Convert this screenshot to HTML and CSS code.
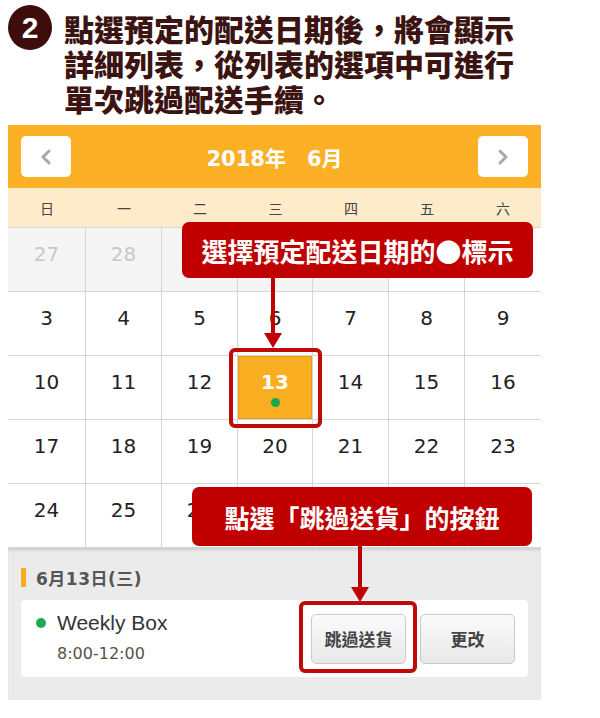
FILE: index.html
```html
<!DOCTYPE html>
<html lang="zh-Hant">
<head>
<meta charset="utf-8">
<title>單次跳過配送</title>
<link rel="stylesheet" href="styles.css">
</head>
<body>
<div class="page">
  <header class="step">
    <div class="num">2</div>
    <h1>點選預定的配送日期後，將會顯示<br>詳細列表，從列表的選項中可進行<br>單次跳過配送手續。</h1>
  </header>

  <div class="cal">
    <div class="cal-head">
      <div class="nav"><svg width="14" height="16" viewBox="0 0 14 16"><path d="M10 2 L4 8 L10 14" stroke="#a8a8a8" stroke-width="3" fill="none" stroke-linecap="round" stroke-linejoin="round"/></svg></div>
      <div class="month">2018年　6月</div>
      <div class="nav"><svg width="14" height="16" viewBox="0 0 14 16"><path d="M4 2 L10 8 L4 14" stroke="#a8a8a8" stroke-width="3" fill="none" stroke-linecap="round" stroke-linejoin="round"/></svg></div>
    </div>
    <div class="weekdays">
      <span>日</span><span>一</span><span>二</span><span>三</span><span>四</span><span>五</span><span>六</span>
    </div>
    <div class="grid">
      <div class="cell off">27</div><div class="cell off">28</div><div class="cell off">29</div><div class="cell off">30</div><div class="cell off">31</div><div class="cell">1</div><div class="cell">2</div>
      <div class="cell">3</div><div class="cell">4</div><div class="cell">5</div><div class="cell">6</div><div class="cell">7</div><div class="cell">8</div><div class="cell">9</div>
      <div class="cell">10</div><div class="cell">11</div><div class="cell">12</div><div class="cell sel">13<span class="dot"></span></div><div class="cell">14</div><div class="cell">15</div><div class="cell">16</div>
      <div class="cell">17</div><div class="cell">18</div><div class="cell">19</div><div class="cell">20</div><div class="cell">21</div><div class="cell">22</div><div class="cell">23</div>
      <div class="cell">24</div><div class="cell">25</div><div class="cell">26</div><div class="cell">27</div><div class="cell">28</div><div class="cell">29</div><div class="cell">30</div>
    </div>
    <div class="detail">
      <div class="detail-title">6月13日(三)</div>
      <div class="card">
        <div class="info">
          <div class="name"><span class="gdot"></span>Weekly Box</div>
          <div class="time">8:00-12:00</div>
        </div>
        <div class="btns">
          <button class="btn">跳過送貨</button>
          <button class="btn">更改</button>
        </div>
      </div>
    </div>

    <div class="callout c1">選擇預定配送日期的●標示</div>
    <div class="arrow a1"><div class="shaft"></div><div class="head"></div></div>
    <div class="frame f1"></div>

    <div class="callout c2">點選「跳過送貨」的按鈕</div>
    <div class="arrow a2"><div class="shaft"></div><div class="head"></div></div>
    <div class="frame f2"></div>
  </div>
</div>
</body>
</html>
```

FILE: styles.css
```css
* { box-sizing: border-box; }
body {
  margin: 0;
  background: #fff;
  font-family: "Noto Sans CJK TC", "Noto Sans", sans-serif;
}
.page { width: 600px; }

.step {
  display: flex;
  align-items: flex-start;
  gap: 12px;
  padding: 5px 0 0 8px;
  height: 125px;
}
.num {
  flex: none;
  width: 44px;
  height: 45px;
  border-radius: 50%;
  background: #3d0d0c;
  color: #fff;
  font: bold 30px/45px "Liberation Sans", sans-serif;
  text-align: center;
}
.step h1 {
  margin: 6px 0 0;
  font-size: 30px;
  line-height: 35px;
  font-weight: 900;
  color: #3b1412;
}

.cal {
  position: relative;
  width: 533px;
  margin-left: 8px;
}
.cal-head {
  height: 63px;
  background: #fcb026;
  display: flex;
  align-items: center;
  justify-content: space-between;
  padding: 0 13px;
}
.nav {
  width: 50px;
  height: 41px;
  background: #fff;
  border-radius: 5px;
  display: flex;
  align-items: center;
  justify-content: center;
}
.month {
  color: #fff;
  font: bold 21px "DejaVu Sans", "Noto Sans CJK TC", sans-serif;
}
.weekdays {
  display: grid;
  grid-template-columns: 78px 76px 76px 75px 76px 76px 76px;
  height: 40px;
  align-items: center;
  text-align: center;
  background: #fdebc9;
  border-bottom: 1px solid #d6d6d6;
  font-size: 14px;
  color: #444;
}
.grid {
  display: grid;
  grid-template-columns: 78px 76px 76px 75px 76px 76px 76px;
}
.cell {
  height: 64px;
  border-right: 1px solid #d6d6d6;
  border-bottom: 1px solid #d6d6d6;
  text-align: center;
  padding-top: 14px;
  font: 20px/24px "DejaVu Sans", sans-serif;
  color: #222;
}
.cell:nth-child(7n) { border-right: none; }
.cell.off { background: #f5f5f5; color: #c8c8c8; }
.cell.sel {
  background: #f9ae22;
  color: #fff;
  font-weight: bold;
  box-shadow: inset 0 0 0 1px #e49c16;
}
.dot {
  display: block;
  width: 9px;
  height: 9px;
  margin: 4px auto 0;
  border-radius: 50%;
  background: #1ba851;
}

.detail {
  height: 152px;
  background: #ebebeb;
  padding: 20px 13px 0;
  box-shadow: inset 0 3px 3px -1px rgba(0,0,0,.13);
}
.detail-title {
  display: flex;
  align-items: center;
  height: 19px;
  border-left: 5px solid #f9ab1c;
  padding-left: 10px;
  font: bold 17px "DejaVu Sans", "Noto Sans CJK TC", sans-serif;
  letter-spacing: 0.5px;
  color: #555;
}
.card {
  margin-top: 13px;
  height: 77px;
  background: #fff;
  border-radius: 4px;
  display: flex;
  align-items: center;
  justify-content: space-between;
  padding: 0 13px 0 15px;
}
.info { margin-top: -2px; }
.name {
  display: flex;
  align-items: center;
  gap: 11px;
  font: 21px/24px "Liberation Sans", sans-serif;
  color: #333;
}
.gdot {
  width: 10px;
  height: 10px;
  border-radius: 50%;
  background: #1ea957;
}
.time {
  margin: 9px 0 0 21px;
  font: 16px/20px "DejaVu Sans", sans-serif;
  color: #5a5048;
}
.btns { display: flex; gap: 14px; }
.btn {
  width: 95px;
  height: 50px;
  border: 1px solid #c9c9c9;
  border-radius: 5px;
  background: linear-gradient(#fbfbfb, #e8e8e8);
  font: bold 17px "Noto Sans CJK TC", sans-serif;
  color: #444;
  padding: 0;
}

.callout {
  position: absolute;
  background: #c00000;
  color: #fff;
  border-radius: 7px;
  font-weight: bold;
  display: flex;
  align-items: center;
  justify-content: center;
}
.c1 { left: 174px; top: 97px; width: 351px; height: 56px; font-size: 26px; }
.c2 { left: 184px; top: 362px; width: 340px; height: 59px; font-size: 25px; }

.arrow {
  position: absolute;
  width: 18px;
  display: flex;
  flex-direction: column;
  align-items: center;
}
.arrow .shaft { width: 4px; flex: 1; background: #c00000; }
.arrow .head {
  border-left: 9px solid transparent;
  border-right: 9px solid transparent;
  border-top: 15px solid #c00000;
}
.a1 { left: 256px; top: 153px; height: 70px; }
.a2 { left: 343px; top: 421px; height: 56px; }

.frame {
  position: absolute;
  border: 4px solid #bf0a0a;
  border-radius: 6px;
}
.f1 { left: 221px; top: 223px; width: 93px; height: 80px; }
.f2 { left: 291px; top: 476px; width: 118px; height: 72px; }
```
